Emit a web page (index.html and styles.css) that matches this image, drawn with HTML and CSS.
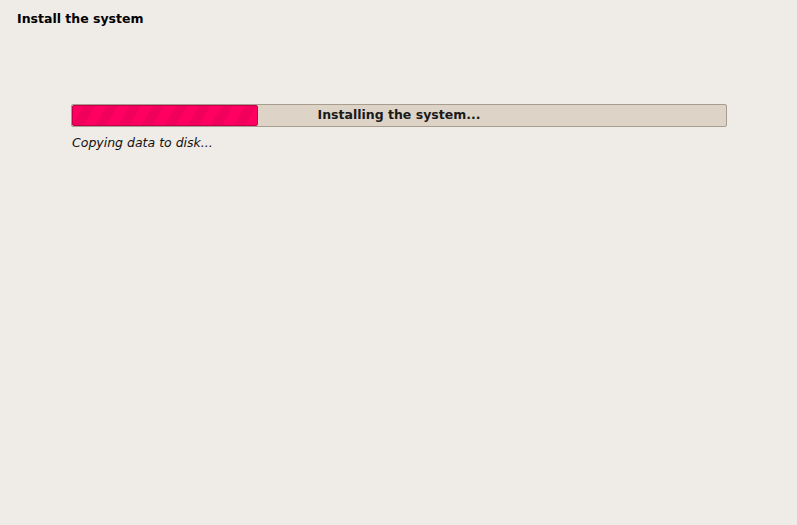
FILE: index.html
```html
<!DOCTYPE html>
<html>
<head>
	<meta charset="UTF-8">
	<title>Install the system</title>
<link rel="stylesheet" href="styles.css">
</head>
<body>

<section class="page">
	<h1 class="title">Install the system</h1>
	<div class="progress">
		<div class="progress-bar" style="width: 28.5%"></div>
		<span class="progress-text">Installing the system...</span>
	</div>
	<p class="status">Copying data to disk...</p>
</section>

</body>
</html>
```

FILE: styles.css
```css
body,
h1,
p {
	margin: 0;
}
body {
	background: #efebe7;
	font-family: "DejaVu Sans", "Liberation Sans", sans-serif;
	color: #000;
}
.page {
	padding: 11px 70px 0 17px;
}
.title {
	font-size: 12.5px;
	font-weight: bold;
	line-height: 16px;
}
.progress {
	position: relative;
	margin: 77px 0 0 54px;
	height: 21px;
	border: 1px solid #a79e90;
	border-radius: 2px;
	background: #ddd3c7;
}
.progress-bar {
	box-sizing: border-box;
	height: 21px;
	border: 1px solid #c4004a;
	border-radius: 2px;
	background-color: #ff0062;
	background-image: repeating-linear-gradient(-60deg, transparent 0 10px, rgba(190, 0, 70, 0.22) 10px 20px);
}
.progress-text {
	position: absolute;
	left: 0;
	right: 0;
	top: 0;
	line-height: 20px;
	text-align: center;
	font-size: 12.5px;
	font-weight: bold;
	color: #1a1a1a;
}
.status {
	margin: 8px 0 0 55px;
	font-size: 12.5px;
	font-style: italic;
	line-height: 16px;
	color: #111;
}
```
